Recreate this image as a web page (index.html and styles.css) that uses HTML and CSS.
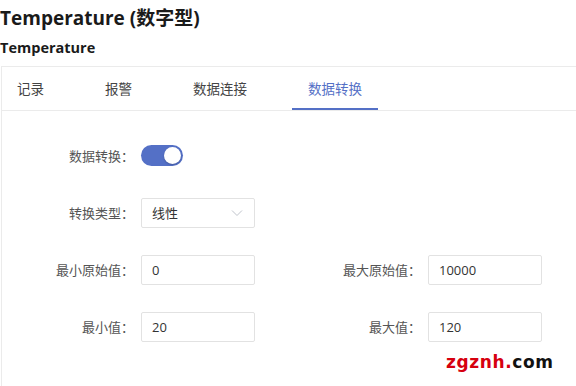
FILE: index.html
```html
<!DOCTYPE html>
<html lang="zh-CN">
<head>
    <meta charset="UTF-8">
    <meta name="viewport" content="width=device-width, initial-scale=1.0">
    <title>Temperature (数字型)</title>
    <link rel="stylesheet" href="styles.css">
</head>
<body>
    <div class="page">
        <h1 class="page-title">Temperature (数字型)</h1>
        <h2 class="page-subtitle">Temperature</h2>

        <div class="panel">
            <div class="tabs">
                <div class="tab">记录</div>
                <div class="tab">报警</div>
                <div class="tab">数据连接</div>
                <div class="tab active">数据转换</div>
            </div>

            <div class="panel-body">
                <div class="form-row">
                    <div class="form-item">
                        <label class="form-label">数据转换：</label>
                        <div class="switch on"><span class="switch-knob"></span></div>
                    </div>
                </div>

                <div class="form-row">
                    <div class="form-item">
                        <label class="form-label">转换类型：</label>
                        <div class="select">
                            <span>线性</span>
                            <svg class="chevron" width="12" height="8" viewBox="0 0 12 8">
                                <path d="M1 1.5 L6 6.5 L11 1.5" fill="none" stroke="#c0c4cc" stroke-width="1"/>
                            </svg>
                        </div>
                    </div>
                </div>

                <div class="form-row">
                    <div class="form-item">
                        <label class="form-label">最小原始值：</label>
                        <input class="text-input" type="text" value="0">
                    </div>
                    <div class="form-item">
                        <label class="form-label">最大原始值：</label>
                        <input class="text-input" type="text" value="10000">
                    </div>
                </div>

                <div class="form-row">
                    <div class="form-item">
                        <label class="form-label">最小值：</label>
                        <input class="text-input" type="text" value="20">
                    </div>
                    <div class="form-item">
                        <label class="form-label">最大值：</label>
                        <input class="text-input" type="text" value="120">
                    </div>
                </div>
            </div>
        </div>

        <div class="watermark"><span class="wm-red">zgznh.</span>com</div>
    </div>
</body>
</html>
```

FILE: styles.css
```css
* {
    margin: 0;
    padding: 0;
    box-sizing: border-box;
}

body {
    font-family: "Open Sans", "Noto Sans CJK SC", sans-serif;
    background: #ffffff;
    color: #333;
    overflow: hidden;
}

.page {
    position: relative;
    width: 576px;
    height: 386px;
    overflow: hidden;
}

.page-title {
    font-size: 19px;
    font-weight: 700;
    color: #1a1a1a;
    line-height: 26px;
    padding-top: 5px;
}

.page-subtitle {
    font-size: 14.5px;
    font-weight: 700;
    color: #1a1a1a;
    line-height: 20px;
    margin-top: 7px;
}

.panel {
    margin-top: 8px;
    margin-left: 1px;
    width: 600px;
    height: 400px;
    border: 1px solid #ebebeb;
    background: #fff;
}

.tabs {
    display: flex;
    gap: 29px;
    height: 44px;
    border-bottom: 1px solid #ebebeb;
}

.tab {
    padding: 0 16px;
    font-family: "Noto Sans CJK SC", sans-serif;
    font-size: 13.5px;
    color: #444;
    line-height: 43px;
    border-bottom: 2px solid transparent;
}

.tab:first-child {
    padding-left: 15px;
}

.tab.active {
    color: #5470c6;
    border-bottom-color: #5470c6;
}

.panel-body {
    padding-top: 16px;
}

.form-row {
    display: flex;
    height: 57px;
}

.form-item {
    display: flex;
    align-items: center;
    width: 287px;
}

.form-label {
    width: 132px;
    margin-right: 7px;
    text-align: right;
    font-family: "Noto Sans CJK JP", "Noto Sans CJK SC", sans-serif;
    font-size: 13px;
    color: #555;
    line-height: 30px;
}

.switch {
    position: relative;
    width: 42px;
    height: 21px;
    border-radius: 11px;
    background: #5470c6;
}

.switch-knob {
    position: absolute;
    top: 2px;
    right: 2px;
    width: 17px;
    height: 17px;
    border-radius: 50%;
    background: #fff;
    box-shadow: 0 1px 2px rgba(0, 0, 0, 0.2);
}

.select,
.text-input {
    width: 114px;
    height: 30px;
    border: 1px solid #e2e2e2;
    border-radius: 2px;
    background: #fff;
    font-size: 13px;
    color: #333;
}

.select {
    display: flex;
    align-items: center;
    justify-content: space-between;
    padding: 0 11px 0 10px;
    font-family: "Noto Sans CJK SC", sans-serif;
}

.text-input {
    padding: 0 10px;
    font-family: "Open Sans", sans-serif;
    outline: none;
}

.watermark {
    position: absolute;
    left: 446px;
    top: 353px;
    font-family: "DejaVu Sans", Verdana, sans-serif;
    font-size: 17px;
    line-height: 19px;
    font-weight: 700;
    letter-spacing: 0.6px;
    color: #111;
}

.wm-red {
    color: #d6000f;
}
```
